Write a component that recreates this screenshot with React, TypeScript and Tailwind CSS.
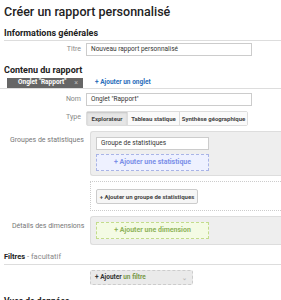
import React from "react";

function Row({ label, children, className = "" }: { label: string; children: React.ReactNode; className?: string }) {
  return (
    <div className={`flex ${className}`}>
      <div className="w-[86px] shrink-0 pr-[5px] text-right text-[7px] leading-[13px] text-[#888]">{label}</div>
      <div className="min-w-0 flex-1">{children}</div>
    </div>
  );
}

function TextBox({ value, width }: { value: string; width: string }) {
  return (
    <div className={`${width} h-[13px] border border-[#ccc] bg-white px-[4px] text-[6.5px] leading-[11px] text-[#333]`}>
      {value}
    </div>
  );
}

export default function App() {
  return (
    <div className="h-[300px] w-[281px] overflow-hidden bg-white font-['Roboto','Liberation_Sans',sans-serif] text-[#333]">
      <h1 className="pl-[4px] pt-[5px] text-[12.5px] font-medium leading-[13px] text-[#222]">
        Créer un rapport personnalisé
      </h1>

      {/* Informations générales */}
      <h2 className="mt-[10px] pl-[4px] text-[9px] font-bold leading-[10px] text-[#222]">Informations générales</h2>
      <div className="ml-[4px] mt-[2px] border-t border-[#ddd]" />
      <Row label="Titre" className="mt-[2px]">
        <TextBox value="Nouveau rapport personnalisé" width="w-[166px]" />
      </Row>

      {/* Contenu du rapport */}
      <h2 className="mt-[9px] pl-[4px] text-[9px] font-bold leading-[10px] text-[#222]">Contenu du rapport</h2>
      <div className="mt-[3px] flex items-end border-b border-[#ddd] pl-[7px]">
        <div className="flex h-[10px] w-[76px] items-center justify-between bg-[#666] pl-[11px] pr-[5px] text-[6.5px] font-bold text-white">
          <span>Onglet "Rapport"</span>
          <span className="text-[7px] font-normal text-[#bbb]">×</span>
        </div>
        <div className="ml-[12px] pb-[1px] text-[6.5px] font-bold leading-[9px] text-[#2a6ebb]">+ Ajouter un onglet</div>
      </div>

      <Row label="Nom" className="mt-[4px]">
        <TextBox value={'Onglet "Rapport"'} width="w-[166px]" />
      </Row>

      <Row label="Type" className="mt-[5px]">
        <div className="flex h-[15px] w-[162px] items-stretch rounded-[2px] border border-[#ddd] text-[6px] font-bold text-[#444]">
          <div className="flex w-[40px] items-center justify-center bg-[#e6e6e6] shadow-[inset_0_1px_2px_rgba(0,0,0,0.15)]">Explorateur</div>
          <div className="flex w-[52px] items-center justify-center border-l border-[#ddd] bg-[#fafafa]">Tableau statique</div>
          <div className="flex flex-1 items-center justify-center border-l border-[#ddd] bg-[#fafafa]">Synthèse géographique</div>
        </div>
      </Row>

      {/* Groupes de statistiques */}
      <div className="mt-[5px] flex">
        <div className="w-[90px] shrink-0 pl-[10px] pt-[5px] text-[7px] leading-[9px] text-[#777]">Groupes de statistiques</div>
        <div className="flex-1">
          <div className="h-[45px] rounded-l-[3px] border border-r-0 border-[#ddd] bg-[#eee] pl-[5px] pt-[5px]">
            <TextBox value="Groupe de statistiques" width="w-[113px]" />
            <div className="mt-[4px] flex h-[17px] w-[113px] items-center justify-center border border-dashed border-[#a9b4e6] bg-[#eef1ff] text-[7px] font-bold text-[#7b8fe8]">
              + Ajouter une statistique
            </div>
          </div>
          <div className="mt-[5px] flex h-[30px] items-center border border-r-0 border-dotted border-[#ccc] pl-[5px]">
            <div className="flex h-[15px] w-[102px] items-center justify-center rounded-[2px] border border-[#ccc] bg-[#f6f6f6] text-[6px] font-bold text-[#444]">
              + Ajouter un groupe de statistiques
            </div>
          </div>
        </div>
      </div>

      {/* Détails des dimensions */}
      <div className="mt-[5px] flex">
        <div className="w-[90px] shrink-0 pl-[12px] pt-[6px] text-[7px] leading-[9px] text-[#777]">Détails des dimensions</div>
        <div className="flex-1">
          <div className="h-[29px] rounded-l-[3px] border border-r-0 border-[#ddd] bg-[#eee] pl-[5px] pt-[5px]">
            <div className="flex h-[17px] w-[113px] items-center justify-center border border-dashed border-[#c3dc8c] bg-[#f4fbe4] text-[7px] font-bold text-[#8fb35c]">
              + Ajouter une dimension
            </div>
          </div>
        </div>
      </div>

      {/* Filtres */}
      <div className="mt-[7px] pl-[4px] text-[7.5px] leading-[10px] text-[#888]">
        <span className="font-bold text-[#222]">Filtres</span> - facultatif
      </div>
      <div className="ml-[4px] mt-[2px] border-t border-[#ddd]" />
      <div className="ml-[90px] mt-[5px] flex h-[15px] w-[103px] items-center justify-between rounded-[2px] border border-dashed border-[#ccc] bg-[#eaeaea] pl-[4px] pr-[5px] text-[6.5px] font-bold">
        <span>
          <span className="text-[#333]">+ Ajouter </span>
          <span className="text-[#7a9a4a]">un filtre</span>
        </span>
        <span className="text-[6px] text-[#bbb]">⌄</span>
      </div>

      <div className="mt-[11px] pl-[4px] text-[8.5px] font-bold leading-[10px] text-[#222]">Vues de données</div>
    </div>
  );
}
